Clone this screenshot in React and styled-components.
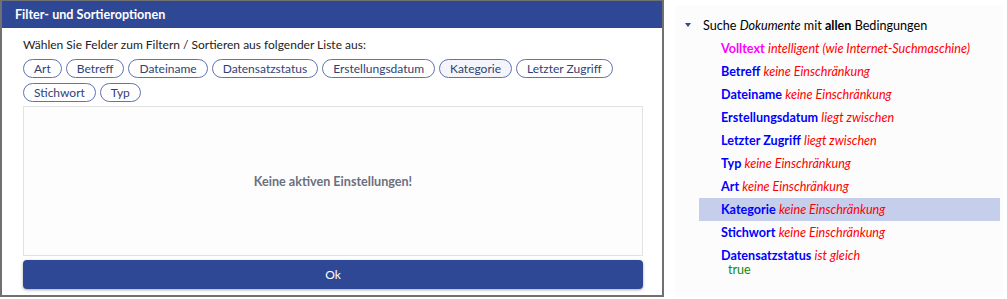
import styled, { createGlobalStyle } from "styled-components";

const GlobalStyle = createGlobalStyle`
  html, body {
    margin: 0;
    padding: 0;
    background: #ffffff;
  }
  body {
    font-family: "Segoe UI", Lato, "Noto Sans", sans-serif;
    font-size: 12px;
  }
`;

const fields = [
  "Art",
  "Betreff",
  "Dateiname",
  "Datensatzstatus",
  "Erstellungsdatum",
  "Kategorie",
  "Letzter Zugriff",
  "Stichwort",
  "Typ",
];

const conditions = [
  { name: "Volltext", op: "intelligent (wie Internet-Suchmaschine)", kind: "full" },
  { name: "Betreff", op: "keine Einschränkung" },
  { name: "Dateiname", op: "keine Einschränkung" },
  { name: "Erstellungsdatum", op: "liegt zwischen" },
  { name: "Letzter Zugriff", op: "liegt zwischen" },
  { name: "Typ", op: "keine Einschränkung" },
  { name: "Art", op: "keine Einschränkung" },
  { name: "Kategorie", op: "keine Einschränkung", selected: true },
  { name: "Stichwort", op: "keine Einschränkung" },
  { name: "Datensatzstatus", op: "ist gleich", value: "true" },
];

const Page = styled.div`
  display: flex;
  align-items: flex-start;
  gap: 11px;
  width: 1007px;
  height: 299px;
`;

const Dialog = styled.div`
  width: 660px;
  height: 294px;
  border: 2px solid #707070;
  border-top-width: 1px;
  display: flex;
  flex-direction: column;
  background: #ffffff;
`;

const TitleBar = styled.div`
  height: 28px;
  background: #2e4895;
  color: #ffffff;
  font-weight: 700;
  font-size: 12.6px;
  display: flex;
  align-items: center;
  padding-left: 13px;
`;

const Body = styled.div`
  flex: 1;
  display: flex;
  flex-direction: column;
  padding: 9px 19px 6px 21px;
`;

const Hint = styled.div`
  color: #222222;
  line-height: 16px;
  margin-bottom: 6px;
`;

const ChipList = styled.div`
  display: flex;
  flex-wrap: wrap;
  gap: 5px 4px;
  margin-bottom: 4px;
`;

const Chip = styled.span`
  height: 17px;
  line-height: 17px;
  padding: 0 10px;
  border: 1px solid #5f73b3;
  border-radius: 10px;
  color: #2f4276;
  background: ${(p) => (p.$active ? "#f3f5fa" : "#ffffff")};
`;

const Settings = styled.div`
  height: 148px;
  border: 1px solid #e2e2e2;
  background: #fdfdfd;
  display: flex;
  align-items: center;
  justify-content: center;
  color: #6b6f7d;
  font-weight: 700;
  font-size: 12.6px;
`;

const OkButton = styled.button`
  margin-top: 4px;
  height: 29px;
  border: none;
  border-radius: 4px;
  background: #2e4895;
  color: #ffffff;
  font: inherit;
  box-shadow: 0 1px 3px rgba(0, 0, 0, 0.35);
`;

const Panel = styled.div`
  margin-top: 6px;
  width: 328px;
  height: 291px;
  background: #fcfcfc;
  padding-top: 8px;
  box-sizing: border-box;
  font-size: 12.6px;
`;

const Root = styled.div`
  display: flex;
  align-items: center;
  height: 23px;
  padding-left: 10px;
  color: #000000;
`;

const Caret = styled.span`
  width: 0;
  height: 0;
  border-left: 3.5px solid transparent;
  border-right: 3.5px solid transparent;
  border-top: 4px solid #2d4b8c;
  margin-right: 12px;
  margin-top: -2px;
`;

const Row = styled.div`
  margin-left: 24px;
  margin-right: 3px;
  padding-left: 22px;
  min-height: 23px;
  line-height: 23px;
  background: ${(p) => (p.$selected ? "#c5cfec" : "transparent")};
`;

const Name = styled.b`
  color: ${(p) => (p.$full ? "#ff00ff" : "#0000ff")};
`;

const Op = styled.i`
  color: #ff0000;
`;

const Value = styled.div`
  color: #108a10;
  line-height: 14px;
  margin-top: -4px;
  padding-left: 7px;
`;

export default function App() {
  return (
    <>
      <GlobalStyle />
      <Page>
        <Dialog>
          <TitleBar>Filter- und Sortieroptionen</TitleBar>
          <Body>
            <Hint>Wählen Sie Felder zum Filtern / Sortieren aus folgender Liste aus:</Hint>
            <ChipList>
              {fields.map((f) => (
                <Chip key={f} $active={f === "Kategorie"}>
                  {f}
                </Chip>
              ))}
            </ChipList>
            <Settings>Keine aktiven Einstellungen!</Settings>
            <OkButton>Ok</OkButton>
          </Body>
        </Dialog>
        <Panel>
          <Root>
            <Caret />
            <span>
              Suche <i>Dokumente</i> mit <b>allen</b> Bedingungen
            </span>
          </Root>
          {conditions.map((c) => (
            <Row key={c.name} $selected={c.selected}>
              <Name $full={c.kind === "full"}>{c.name}</Name> <Op>{c.op}</Op>
              {c.value && <Value>{c.value}</Value>}
            </Row>
          ))}
        </Panel>
      </Page>
    </>
  );
}
